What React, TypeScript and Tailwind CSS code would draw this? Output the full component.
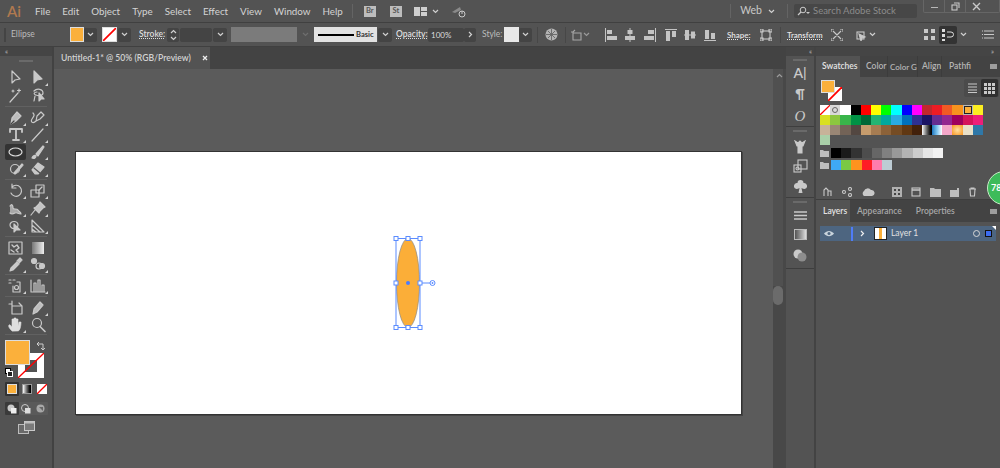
import React from "react";

const GR = "#c9c9c9";

function Tool({ fly, children }: { fly?: boolean; children?: React.ReactNode }) {
  return (
    <svg width="22" height="17.5" viewBox="0 0 22 17.5" className="block">
      <g fill="none" stroke={GR} strokeWidth="1.2" strokeLinejoin="round" strokeLinecap="round">{children}</g>
      {fly && <polygon points="21,14 21,17 18,17" fill="#d0d0d0" />}
    </svg>
  );
}

function Chev({ c = "#d0d0d0", w = 7 }: { c?: string; w?: number }) {
  return (
    <svg width={w} height="5" viewBox="0 0 7 5" className="block">
      <path d="M1 1l2.5 2.5L6 1" fill="none" stroke={c} strokeWidth="1.2" />
    </svg>
  );
}

function Ic({ w = 14, h = 14, children }: { w?: number; h?: number; children?: React.ReactNode }) {
  return (
    <svg width={w} height={h} viewBox={`0 0 ${w} ${h}`} className="block shrink-0">
      <g fill="none" stroke={GR} strokeWidth="1.1">{children}</g>
    </svg>
  );
}

const Sep = () => <div className="h-px bg-[#616161] mx-[5px] my-[1px] w-[42px]" />;

const menus = ["File", "Edit", "Object", "Type", "Select", "Effect", "View", "Window", "Help"];

const row1 = ["none", "reg", "#ffffff", "#000000", "#ff0000", "#ffff00", "#00ff00", "#00ffff", "#0000ff", "#ff00ff", "#c1272d", "#ed1c24", "#f15a24", "#f7931e", "sel", "#fcee21"];
const row2 = ["#d9e021", "#8cc63f", "#39b54a", "#009245", "#006837", "#22b573", "#00a99d", "#29abe2", "#0071bc", "#2e3192", "#1b1464", "#662d91", "#93278f", "#9e005d", "#d4145a", "#ed1e79"];
const row3 = ["#c7b299", "#998675", "#736357", "#534741", "#c69c6d", "#a67c52", "#8c6239", "#754c24", "#603813", "#42210b"];
const grays = ["#000000", "#1a1a1a", "#333333", "#4d4d4d", "#666666", "#808080", "#999999", "#b3b3b3", "#cccccc", "#e6e6e6", "#f2f2f2"];
const cols = ["#3fa9f5", "#7ac943", "#ff931e", "#ff1d25", "#ff7bac", "#bdccd4"];

function NoneSwatch({ cls }: { cls: string }) {
  return (
    <svg viewBox="0 0 10 10" preserveAspectRatio="none" className={cls}>
      <rect width="10" height="10" fill="#fff" />
      <path d="M0 10L10 0" stroke="#f00" strokeWidth="1.3" />
    </svg>
  );
}

function Swatch({ c }: { c: string }) {
  if (c === "none") return <NoneSwatch cls="w-[10.2px] h-[10px] block" />;
  if (c === "reg")
    return (
      <div className="w-[10.2px] h-[10px] bg-[#d8d8d8] flex items-center justify-center">
        <div className="w-[6px] h-[6px] rounded-full border border-[#666]" />
      </div>
    );
  if (c === "sel")
    return (
      <div className="w-[10.2px] h-[10px] bg-[#b8b8b8] p-[1px]">
        <div className="w-full h-full bg-[#fbb03b] border border-[#222]" />
      </div>
    );
  return <div className="w-[10.2px] h-[10px]" style={{ background: c }} />;
}

const Folder = () => (
  <svg width="9" height="8" viewBox="0 0 9 8" className="block mr-[2px]">
    <path d="M0 1h3l1 1h5v6H0z" fill="#bdbdbd" />
  </svg>
);

function Swatches() {
  return (
    <div className="flex flex-col ml-[4px] mt-[2px] w-[164px]">
      <div className="flex">{row1.map((c, i) => <Swatch key={i} c={c} />)}</div>
      <div className="flex">{row2.map((c, i) => <Swatch key={i} c={c} />)}</div>
      <div className="flex">
        {row3.map((c, i) => <Swatch key={i} c={c} />)}
        <div className="w-[10.2px] h-[10px] bg-gradient-to-r from-[#fff] to-[#000]" />
        <div className="w-[10.2px] h-[10px] bg-gradient-to-r from-[#1b75bc] via-[#7cc4ee] to-[#fff]" />
        <div className="w-[10.2px] h-[10px] bg-[#f3a6c8]" />
        <div className="w-[10.2px] h-[10px] bg-[radial-gradient(circle,#ffe0a0,#f7931e)]" />
        <div className="w-[10.2px] h-[10px] bg-[#e8e0c8]" />
        <div className="w-[10.2px] h-[10px] bg-[#2f78a8]" />
      </div>
      <div className="w-[10.2px] h-[10px] bg-[#a9cfa8]" />
      <div className="flex items-center mt-[3px] h-[10px]">
        <Folder />
        {grays.map((c, i) => <Swatch key={i} c={c} />)}
      </div>
      <div className="flex items-center mt-[2px] h-[10px]">
        <Folder />
        {cols.map((c, i) => <Swatch key={i} c={c} />)}
      </div>
    </div>
  );
}

function Dark({ cls, children }: { cls: string; children?: React.ReactNode }) {
  return <div className={`h-[14px] bg-[#444444] rounded-[2px] flex items-center justify-center shrink-0 ${cls}`}>{children}</div>;
}

const Grip = () => <div className="w-[14px] h-[2px] bg-[#6a6a6a] shrink-0" />;

export default function App() {
  return (
    <div
      className="w-[1000px] h-[468px] bg-[#535353] flex flex-col overflow-hidden relative text-[#d4d4d4] text-[9.5px]"
      style={{ fontFamily: 'Lato,"Liberation Sans",sans-serif' }}
    >
      {/* menu bar */}
      <div className="h-[23px] flex items-center shrink-0 border-b border-[#404040] bg-[#535353]">
        <span className="ml-[7px] w-[16px] text-[15px] text-[#b0794f] font-semibold leading-none">Ai</span>
        <div className="flex ml-[12px] gap-[12px] text-[9.8px]">
          {menus.map((m) => <span key={m}>{m}</span>)}
        </div>
        <div className="w-px h-[14px] bg-[#646464] ml-[9px]" />
        <div className="ml-[11px] w-[12px] h-[11px] bg-[#bdbdbd] text-[#555] text-[7.5px] flex items-center justify-center font-bold">Br</div>
        <div className="ml-[14px] w-[12px] h-[11px] bg-[#bdbdbd] text-[#555] text-[7.5px] flex items-center justify-center font-bold">St</div>
        <div className="ml-[12px] w-[13px] h-[9px] flex gap-[1px]">
          <div className="w-[6px] bg-[#cfcfcf]" />
          <div className="flex-1 flex flex-col gap-[1px]"><div className="flex-1 bg-[#cfcfcf]" /><div className="flex-1 bg-[#cfcfcf]" /></div>
        </div>
        <div className="ml-[5px]"><Chev /></div>
        <svg width="16" height="13" viewBox="0 0 16 13" className="ml-[12px]">
          <path d="M1 7l8-5 1 3-6 3z" fill="#8a8a8a" />
          <circle cx="11" cy="9" r="3" fill="none" stroke="#c9c9c9" strokeWidth="1" />
          <path d="M11 6v3" stroke="#c9c9c9" strokeWidth="1" />
        </svg>
        <div className="flex-1" />
        <div className="w-px h-[14px] bg-[#646464] mr-[9px]" />
        <span className="text-[10.5px] text-[#c8c8c8]">Web</span>
        <div className="ml-[6px]"><Chev /></div>
        <div className="w-px h-[14px] bg-[#646464] ml-[12px] mr-[6px]" />
        <div className="w-[123px] h-[14px] bg-[#474747] rounded-[2px] flex items-center pl-[3px] text-[#8b8b8b] text-[9.5px]">
          <svg width="14" height="10" viewBox="0 0 14 10">
            <circle cx="6" cy="4" r="2.8" fill="none" stroke="#c9c9c9" strokeWidth="1" />
            <path d="M4 6L1 9" stroke="#c9c9c9" strokeWidth="1.2" />
            <path d="M9 6h4l-2 2z" fill="#c9c9c9" />
          </svg>
          <span className="ml-[2px]">Search Adobe Stock</span>
        </div>
        <div className="ml-[6px] w-[77px] h-[13px] self-start flex border border-t-0 border-[#666] rounded-b-[2px] items-center text-[#c4c4c4]">
          <div className="w-[20px] flex justify-center"><div className="w-[7px] h-[1.5px] mt-[3px] bg-[#b8b8b8]" /></div>
          <div className="w-[21px] flex justify-center border-l border-[#666] h-full items-center">
            <Ic w={9} h={9}><rect x="1" y="3" width="5" height="5" /><path d="M3 1h5v5" /></Ic>
          </div>
          <div className="flex-1 flex justify-center border-l border-[#666] h-full items-center pr-[12px]">
            <Ic w={9} h={9}><path d="M1 1l7 7M8 1L1 8" strokeWidth="1.4" /></Ic>
          </div>
        </div>
      </div>

      {/* control bar */}
      <div className="h-[24px] flex items-center shrink-0 border-b border-[#404040] text-[8.5px]">
        <div className="ml-[4px] w-[2px] h-[14px] bg-[#444]" />
        <span className="ml-[5px] w-[59px] text-[#bbb]">Ellipse</span>
        <div className="w-[14px] h-[15px] bg-[#fbb03b] border border-[#ddd] shrink-0" />
        <Dark cls="w-[13px] ml-[0px]"><Chev /></Dark>
        <NoneSwatch cls="w-[15px] h-[15px] ml-[5px] border border-[#ddd] block shrink-0" />
        <Dark cls="w-[13px] ml-[1px]"><Chev /></Dark>
        <span className="ml-[8px] w-[24px] underline decoration-dotted text-[#ddd] font-semibold">Stroke:</span>
        <Dark cls="w-[12px] ml-[4px] flex-col gap-[2px]">
          <div className="rotate-180"><Chev /></div>
          <Chev />
        </Dark>
        <Dark cls="w-[32px] ml-[1px] bg-[#3f3f3f]" />
        <Dark cls="w-[14px] ml-[1px]"><Chev /></Dark>
        <div className="w-[66px] h-[15px] ml-[4px] bg-[#7b7b7b] shrink-0" />
        <div className="w-[17px] flex justify-center"><Chev c="#6e6e6e" /></div>
        <div className="w-[63px] h-[15px] bg-[#e2e2e2] flex items-center pl-[4px] shrink-0 text-[#333] text-[7.5px] font-bold">
          <div className="w-[36px] h-[2px] bg-black mr-[2px]" />
          <span>Basic</span>
        </div>
        <Dark cls="w-[14px] ml-[1px]"><Chev /></Dark>
        <span className="ml-[4px] w-[28px] underline decoration-dotted text-[#ddd] font-semibold">Opacity:</span>
        <Dark cls="w-[36px] ml-[4px] justify-start pl-[3px] bg-[#3f3f3f] text-[#ddd] text-[8px]">100%</Dark>
        <Dark cls="w-[12px]"><div className="-rotate-90"><Chev /></div></Dark>
        <span className="ml-[6px] w-[20px] text-[#bbb]">Style:</span>
        <div className="w-[15px] h-[15px] ml-[2px] bg-[#e8e8e8] shrink-0" />
        <Dark cls="w-[13px]"><Chev /></Dark>
        <div className="w-px h-[16px] bg-[#474747] ml-[5px]" />
        <svg width="13" height="13" viewBox="0 0 13 13" className="ml-[7px]">
          <circle cx="6.5" cy="6.5" r="6" fill="#b4b4b4" />
          <path d="M6.5 1v11M1 6.5h11M3 3l7 7M10 3l-7 7" stroke="#666" strokeWidth="0.9" />
        </svg>
        <div className="w-px h-[16px] bg-[#474747] ml-[7px]" />
        <div className="ml-[4px]"><Ic w={12} h={12}><path d="M1 3h2l2-2h0M3 3v8h8V4H3" stroke="#a8a8a8" /></Ic></div>
        <div className="ml-[1px]"><Chev c="#9a9a9a" /></div>
        <svg width="116" height="14" viewBox="0 0 116 14" className="ml-[15px] shrink-0">
          <g fill="#c4c4c4">
            <rect x="0" y="0" width="1" height="14" /><rect x="2" y="2" width="5" height="4" /><rect x="2" y="8" width="10" height="4" />
            <rect x="24.5" y="0" width="1" height="14" /><rect x="22.5" y="2" width="5" height="4" /><rect x="20" y="8" width="10" height="4" />
            <rect x="50" y="0" width="1" height="14" /><rect x="43" y="2" width="6" height="4" /><rect x="39" y="8" width="10" height="4" />
            <rect x="60" y="1" width="12" height="1" /><rect x="61" y="3" width="4" height="10" /><rect x="67" y="3" width="4" height="6" />
            <rect x="79" y="6.5" width="12" height="1" /><rect x="80" y="2" width="4" height="10" /><rect x="86" y="3.5" width="4" height="7" />
            <rect x="99" y="12" width="12" height="1" /><rect x="100" y="2" width="4" height="9" /><rect x="106" y="5" width="4" height="6" />
          </g>
        </svg>
        <span className="ml-[6px] w-[25px] underline decoration-dotted text-[#e4e4e4] font-semibold text-[8px]">Shape:</span>
        <div className="ml-[8px]"><Ic w={12} h={12}><rect x="2" y="2" width="8" height="8" /><path d="M0 0h3v3H0zM9 0h3v3H9zM0 9h3v3H0zM9 9h3v3H9z" /></Ic></div>
        <div className="w-px h-[16px] bg-[#474747] ml-[8px]" />
        <span className="ml-[6px] w-[36px] underline decoration-dotted text-[#e4e4e4] font-semibold text-[8px]">Transform</span>
        <div className="ml-[8px]"><Ic w={12} h={12}><path d="M2 2l8 8M10 2l-8 8M0 0h3M0 0v3M12 0H9M12 0v3M0 12h3M0 12V9M12 12H9M12 12V9" /></Ic></div>
        <div className="ml-[11px]"><Ic w={13} h={12}><rect x="3" y="3" width="7" height="7" /><path d="M5 5l6 3-3 1-1 3z" fill="#c9c9c9" /></Ic></div>
        <div className="ml-[2px]"><Chev /></div>
        <div className="ml-[48px]">
          <svg width="11" height="11" viewBox="0 0 11 11"><path d="M0 0h4v4H0zM7 0h4v4H7zM0 7h4v4H0zM7 7h4v4H7z" fill="#c9c9c9" /></svg>
        </div>
        <div className="ml-[4px] w-[18px] h-[18px] bg-[#333] rounded-[2px] flex items-center justify-center">
          <svg width="12" height="12" viewBox="0 0 12 12"><path d="M0 0h3v3H0zM0 5h3v3H0zM0 10h3v2H0z" fill="#ddd" /><path d="M5 3h4a2 2 0 010 5H5" fill="none" stroke="#ddd" /></svg>
        </div>
        <div className="ml-[3px]"><Chev /></div>
        <div className="ml-[15px]"><Ic w={12} h={9}><path d="M2 1h10M2 4.500h10M2 8h10M0 1h1M0 4.500h1M0 8h1" /></Ic></div>
      </div>

      {/* main */}
      <div className="flex-1 flex min-h-0">
        {/* tools */}
        <div className="w-[54px] shrink-0 flex flex-col border-r-2 border-[#424242]">
          <div className="h-[9px] bg-[#454545] pl-[5px] text-[7px] leading-[9px] text-[#bbb]">«</div>
          <div className="flex-1 flex flex-col">
            <div className="h-[13px] flex justify-center pt-[4px]"><Grip /></div>
            <div className="grid grid-cols-[22px_22px] ml-[5px] auto-rows-[18px] items-center">
              <Tool><path d="M7 2v12l3-3 5-1z" /></Tool>
              <Tool fly><path d="M7 2v12l3-3 5-1z" fill={GR} /></Tool>
              <Tool><path d="M5 15L13 6M14 2v3M12.500 3.500h3M8 3v2M7 4h2" /></Tool>
              <Tool><path d="M7 4c3-3 9-2 9 2 0 3-5 3-7 2-3-1-2-3 1-3M8 9l-1 5" /><path d="M12 6v8l2-2 3 0z" fill={GR} /></Tool>
            </div>
            <Sep />
            <div className="grid grid-cols-[22px_22px] ml-[5px] auto-rows-[17px] mt-[1.5px] items-center">
              <Tool fly><path d="M6 15l1-6 5-6 4 4-5 5z" fill="#bdbdbd" /><path d="M6 15l3-3" stroke="#444" /></Tool>
              <Tool fly><path d="M9 12l1-5 4-4 3 3-4 4zM9 12c-3 3-6 1-4-2s3-4 1-6" /></Tool>
              <Tool fly><path d="M5 3h12v3M5 3v3M11 3v11M8 14h6" strokeWidth="1.8" /></Tool>
              <Tool fly><path d="M5 15L16 3" /></Tool>
              <div className="w-[21px] h-[16px] bg-[#333] rounded-[2px] flex items-center justify-center">
                <svg width="15" height="10" viewBox="0 0 15 10"><ellipse cx="7.500" cy="5" rx="6.500" ry="4" fill="none" stroke="#dedede" strokeWidth="1.200" /></svg>
              </div>
              <Tool fly><path d="M5 15c1-3 3-3 4-2 0 2-2 3-4 2zM9 11l7-8 1 1-6 9z" fill={GR} /></Tool>
              <Tool fly><circle cx="10" cy="9" r="4.500" /><path d="M9 13L17 4l1 1-8 9z" fill={GR} /></Tool>
              <Tool fly><path d="M5 10l6-7 6 4-6 7H8z" fill={GR} /><path d="M7 8l6 5" stroke="#555" /></Tool>
            </div>
            <Sep />
            <div className="grid grid-cols-[22px_22px] ml-[5px] auto-rows-[17.5px] mt-[1.5px] items-center">
              <Tool fly><path d="M7 5a5.500 5.500 0 11-1 6M7 2v4h4" /></Tool>
              <Tool fly><rect x="4" y="8" width="8" height="7" /><rect x="9" y="3" width="8" height="8" /><path d="M12 8l3-3" /></Tool>
              <Tool fly><path d="M5 6c2-3 3 0 3 2s4 0 5 2 3 2 3 4c-3 0-4-2-6-1s-4 1-5 0" fill="#a8a8a8" /></Tool>
              <Tool fly><path d="M13 2l5 5-2 1-3 3-1 2-5-5 2-1 3-3zM8 10l-4 5" fill="#c4c4c4" /></Tool>
              <Tool fly><path d="M5 8a4 3.500 0 018 0 4 3.500 0 01-8 0z" /><path d="M9 7v8l2-2 4 0z" fill={GR} /></Tool>
              <Tool fly><path d="M5 15V3l12 12zM5 8l8 7M5 12l4 3" /></Tool>
            </div>
            <Sep />
            <div className="grid grid-cols-[22px_22px] ml-[5px] auto-rows-[17px] mt-[1.5px] items-center">
              <Tool><rect x="4" y="3" width="13" height="12" /><path d="M7 6l2 2 3-2 2 3-3 2 2 2M6 11l3 2" strokeWidth="1.400" /></Tool>
              <svg width="22" height="17.500" viewBox="0 0 22 17.500"><defs><linearGradient id="gr"><stop offset="0" stopColor="#777" /><stop offset="1" stopColor="#eee" /></linearGradient></defs><rect x="5" y="3" width="12" height="12" fill="url(#gr)" /></svg>
              <Tool fly><path d="M5 15l1-3 6-6 2 2-6 6zM12 5l3-3 2 2-3 3" fill={GR} /></Tool>
              <Tool fly><circle cx="7" cy="5" r="2.500" fill={GR} /><circle cx="12" cy="10" r="3" /><circle cx="15" cy="10" r="2.500" fill={GR} /></Tool>
            </div>
            <Sep />
            <div className="grid grid-cols-[22px_22px] ml-[5px] auto-rows-[17px] mt-[1.5px] items-center">
              <Tool fly><path d="M4 3h2M4 6h2M8 3h2M12 5h3v10H8v-6" /><circle cx="11.500" cy="10.500" r="2" /></Tool>
              <Tool fly><path d="M4 3v12h14M7 14V6h2v8M11 14V3h2v11M15 14V8h2v6" /></Tool>
            </div>
            <Sep />
            <div className="grid grid-cols-[22px_22px] ml-[5px] auto-rows-[17px] mt-[1.5px] items-center">
              <Tool><path d="M4 5h3M7 2v13h10V7H7M14 4l3 3" /></Tool>
              <Tool fly><path d="M6 15l1-5 6-7 3 3-6 7z" fill="#bdbdbd" /></Tool>
              <Tool fly><path d="M7 15c-3-3-4-5-3-6s2 1 3 2V3h2v6V2h2v7V3h2v7l1-4h2c0 4-1 9-3 9z" fill="#dedede" stroke="#dedede" strokeWidth="0.600" /></Tool>
              <Tool><circle cx="10" cy="7" r="4.500" /><path d="M13 10.500L18 15.500" strokeWidth="1.600" /></Tool>
            </div>
            <Sep />
            <div className="relative h-[41px] mt-[4px] shrink-0">
              <div className="absolute left-[18px] top-[13px] w-[26px] h-[25px] bg-white flex items-center justify-center">
                <div className="w-[12px] h-[12px] bg-[#535353]" />
              </div>
              <svg className="absolute left-[18px] top-[13px]" width="26" height="25" viewBox="0 0 26 25"><path d="M0 25L26 0" stroke="#f00" strokeWidth="1.300" /></svg>
              <div className="absolute left-[5px] top-0 w-[25px] h-[25px] bg-[#fbb03b] border border-[#ddd]" />
              <svg className="absolute left-[36px] top-[1px]" width="10" height="10" viewBox="0 0 10 10"><path d="M1 3h6v5M1 3l2-2M1 3l2 2M5 7l2 2 2-2" fill="none" stroke="#ccc" strokeWidth="1" /></svg>
              <div className="absolute left-[5px] top-[28px] w-[8px] h-[9px]">
                <div className="w-[6px] h-[6px] bg-white border border-black" />
                <div className="absolute left-[2px] top-[3px] w-[6px] h-[6px] bg-[#222] border border-white" />
              </div>
            </div>
            <div className="flex ml-[5px] mt-[1px] gap-[1px] items-center">
              <div className="w-[14px] h-[14px] bg-[#333] flex items-center justify-center rounded-[1px]"><div className="w-[10px] h-[10px] bg-[#fbb03b] border border-[#ddd]" /></div>
              <div className="w-[14px] h-[14px] flex items-center justify-center"><div className="w-[10px] h-[10px] bg-gradient-to-r from-white to-black border border-[#999]" /></div>
              <div className="w-[14px] h-[14px] flex items-center justify-center"><NoneSwatch cls="w-[10px] h-[10px] block" /></div>
            </div>
            <div className="flex ml-[5px] mt-[6px] w-[43px] h-[13px] bg-[#5a5a5a] rounded-[1px]">
              <div className="w-[14px] h-[13px] bg-[#3a3a3a] flex items-center justify-center rounded-[1px]">
                <svg width="10" height="10" viewBox="0 0 10 10"><circle cx="4" cy="4" r="3.500" fill="#c9c9c9" /><rect x="4" y="4" width="5.500" height="5.500" fill="#eee" /></svg>
              </div>
              <div className="w-[14px] h-[13px] flex items-center justify-center">
                <svg width="10" height="10" viewBox="0 0 10 10"><circle cx="4" cy="4" r="3.500" fill="none" stroke="#c9c9c9" /><rect x="4" y="4" width="5.500" height="5.500" fill="#ddd" /></svg>
              </div>
              <div className="w-[14px] h-[13px] flex items-center justify-center">
                <svg width="9" height="9" viewBox="0 0 9 9"><circle cx="4.500" cy="4.500" r="4" fill="#a8a8a8" /><path d="M3 3h4v4z" fill="#666" /></svg>
              </div>
            </div>
            <div className="ml-[18px] mt-[6px]">
              <svg width="17" height="13" viewBox="0 0 17 13"><rect x="0.500" y="3.500" width="10" height="9" fill="#6a6a6a" stroke="#bdbdbd" /><rect x="6.500" y="0.500" width="10" height="9" fill="#7a7a7a" stroke="#c9c9c9" /><rect x="6.500" y="0.500" width="10" height="2" fill="#bdbdbd" /></svg>
            </div>
          </div>
        </div>

        {/* document */}
        <div className="flex-1 flex flex-col min-w-0">
          <div className="h-[22px] bg-[#434343] flex shrink-0">
            <div className="w-[156px] bg-[#535353] flex items-center pl-[7px] font-semibold text-[#d2d2d2]">
              <span className="w-[141px] text-[8.6px] whitespace-nowrap">Untitled-1* @ 50% (RGB/Preview)</span>
              <svg width="6" height="6" viewBox="0 0 6 6"><path d="M1 1l4 4M5 1L1 5" stroke="#eee" strokeWidth="1.300" /></svg>
            </div>
          </div>
          <div className="flex-1 flex min-h-0">
            <div className="flex-1 bg-[#5b5b5b] pl-[21px] pt-[82px] min-w-0">
              <div className="w-[667px] h-[264px] bg-white border border-[#333] shadow-[1px_1px_0_#444] flex items-center justify-center">
                <svg width="80" height="100" viewBox="0 0 80 100" className="block mr-[1px]">
                  <ellipse cx="40" cy="50" rx="11.500" ry="44.500" fill="#fbae38" stroke="#8a8a8a" strokeWidth="0.700" />
                  <rect x="28" y="5.500" width="24" height="89" fill="none" stroke="#5b8cff" strokeWidth="1" />
                  <path d="M52 50h13" stroke="#5b8cff" strokeWidth="1" />
                  <circle cx="64.500" cy="50" r="2.500" fill="#fff" stroke="#5b8cff" />
                  <circle cx="64.500" cy="50" r="0.900" fill="#5b8cff" />
                  <circle cx="40" cy="50" r="2" fill="#4a7cff" />
                  <g fill="#fff" stroke="#5b8cff" strokeWidth="1">
                    <rect x="26" y="3.500" width="4" height="4" /><rect x="38" y="3.500" width="4" height="4" /><rect x="50" y="3.500" width="4" height="4" />
                    <rect x="26" y="48" width="4" height="4" /><rect x="50" y="48" width="4" height="4" />
                    <rect x="26" y="92.500" width="4" height="4" /><rect x="38" y="92.500" width="4" height="4" /><rect x="50" y="92.500" width="4" height="4" />
                  </g>
                </svg>
              </div>
            </div>
            <div className="w-[13px] bg-[#484848] shrink-0 flex flex-col items-start">
              <div className="h-[217px] pt-[4px] pl-[2px] bg-[#505050] w-[10px]"><div className="rotate-180"><Chev c="#9a9a9a" /></div></div>
              <div className="w-[10px] h-[19px] rounded-[5px] bg-[#6b6b6b]" />
            </div>
          </div>
        </div>

        {/* dock */}
        <div className="w-[30px] shrink-0 flex flex-col border-r-2 border-[#434343]">
          <div className="h-[9px] bg-[#454545] text-right pr-[2px] text-[7px] leading-[9px] text-[#bbb]">«</div>
          <div className="h-[71px] border-b border-[#3e3e3e] flex flex-col items-center pt-[3px] text-[#c9c9c9]">
            <Grip />
            <span className="mt-[5px] text-[14px] leading-[14px] h-[21px] font-semibold">A|</span>
            <span className="text-[13px] leading-[14px] h-[21px] font-bold">¶</span>
            <span className="text-[15px] leading-[16px] italic" style={{ fontFamily: '"Liberation Serif",serif' }}>O</span>
          </div>
          <div className="h-[71px] border-b border-[#3e3e3e] flex flex-col items-center pt-[3px]">
            <Grip />
            <div className="mt-[8px]"><Ic w={12} h={14}><path d="M1 1l3 2 2-2 2 2 3-2-2 5H8v7H4V6H3z" fill={GR} /></Ic></div>
            <div className="mt-[5px]"><Ic w={15} h={15}><rect x="5" y="1" width="9" height="9" /><rect x="1" y="6" width="7" height="7" /><circle cx="4.500" cy="9.500" r="1.500" /></Ic></div>
            <svg width="13" height="13" viewBox="0 0 13 13" className="mt-[6px]"><path d="M6.500 0a3 3 0 013 3 3 3 0 011 6c-1 0-2-.3-3-1l1 5h-4l1-5c-1 .7-2 1-3 1a3 3 0 011-6 3 3 0 013-3z" fill={GR} /></svg>
          </div>
          <div className="h-[71px] border-b border-[#3e3e3e] flex flex-col items-center pt-[3px]">
            <Grip />
            <div className="mt-[8px]"><Ic w={13} h={9}><path d="M0 1h13M0 4.500h13M0 8h13" strokeWidth="1.300" /></Ic></div>
            <div className="mt-[9px] w-[13px] h-[11px] bg-gradient-to-r from-[#555] to-[#ddd] border border-[#bbb]" />
            <svg width="14" height="13" viewBox="0 0 14 13" className="mt-[9px]"><circle cx="5" cy="5" r="4.500" fill="#c9c9c9" /><circle cx="9" cy="8" r="4.500" fill="#8d8d8d" /></svg>
          </div>
        </div>

        {/* panels */}
        <div className="w-[184px] shrink-0 flex flex-col">
          <div className="h-[9px] bg-[#454545] text-right pr-[6px] text-[7px] leading-[9px] text-[#bbb]">»</div>
          <div className="h-[143px] flex flex-col relative">
            <div className="h-[21px] bg-[#434343] flex items-center text-[8.500px] shrink-0 text-[#b5b5b5] font-semibold">
              <div className="w-[44px] h-full bg-[#535353] flex items-center pl-[6px] text-[#e4e4e4]">Swatches</div>
              <div className="w-[28px] h-full flex items-center pl-[6px] border-r border-[#3c3c3c] whitespace-nowrap">Color</div>
              <div className="w-[30px] h-full flex items-center pl-[2px] border-r border-[#3c3c3c] whitespace-nowrap text-[8px]">Color G</div>
              <div className="w-[24px] h-full flex items-center pl-[4px] border-r border-[#3c3c3c] whitespace-nowrap">Align</div>
              <div className="w-[30px] h-full flex items-center pl-[7px] whitespace-nowrap">Pathfi</div>
              <div className="ml-auto mr-[3px] w-[7px] h-[5px] bg-[#9e9e9e]" />
            </div>
            <div className="flex mt-[1px] h-[25px] relative shrink-0">
              <div className="relative ml-[5px] mt-[2px] w-[22px] h-[22px]">
                <NoneSwatch cls="absolute left-[7px] top-[7px] w-[14px] h-[14px] block" />
                <div className="absolute left-0 top-0 w-[14px] h-[13px] bg-[#fbb03b] border border-[#ddd]" />
              </div>
              <div className="ml-auto mt-[1px] mr-[1px] w-[35px] h-[18px] flex rounded-[2px] bg-[#4b4b4b]">
                <div className="w-[17px] flex items-center justify-center"><Ic w={11} h={10}><path d="M1 1h9M1 4h9M1 7h9M1 9.500h9" strokeWidth="1.100" /></Ic></div>
                <div className="w-[17px] bg-[#303030] flex items-center justify-center rounded-[2px]">
                  <svg width="11" height="11" viewBox="0 0 11 11"><path d="M0 0h3v3H0zM4 0h3v3H4zM8 0h3v3H8zM0 4h3v3H0zM4 4h3v3H4zM8 4h3v3H8zM0 8h3v3H0zM4 8h3v3H4zM8 8h3v3H8z" fill="#c9c9c9" /></svg>
                </div>
              </div>
            </div>
            <Swatches />
            <div className="mt-auto h-[14px] flex items-center pl-[7px] gap-[9px]">
              <Ic w={10} h={10}><path d="M1 9V3l2-2 2 2v6M5 9V4h3v5" /></Ic>
              <Ic w={10} h={10}><circle cx="2" cy="5" r="1.500" /><circle cx="8" cy="2" r="1.500" /><circle cx="8" cy="8" r="1.500" /></Ic>
              <svg width="14" height="9" viewBox="0 0 14 9"><path d="M3 8a3 3 0 010-5 4 4 0 017-1 3 3 0 011 6z" fill="#c9c9c9" /></svg>
              <svg width="10" height="10" viewBox="0 0 10 10" className="ml-[8px]"><path d="M0 0h10v10H0z" fill="#b0b0b0" /><path d="M2 2h2v2H2zM6 2h2v2H6zM2 6h2v2H2zM6 6h2v2H6z" fill="#444" /></svg>
              <Ic w={10} h={10}><rect x="1" y="1" width="8" height="8" /><path d="M1 3h8" strokeWidth="1.500" /></Ic>
              <svg width="11" height="9" viewBox="0 0 11 9"><path d="M0 0h4l1 1h6v8H0z" fill="#bdbdbd" /></svg>
              <svg width="9" height="9" viewBox="0 0 9 9"><path d="M0 2h7V0h2v9H2v0H0z" fill="#bdbdbd" /></svg>
              <Ic w={9} h={10}><path d="M1 2h7M2 2l.500 7h4L7 2M3 2V1h3v1" /></Ic>
            </div>
          </div>
          <div className="h-px bg-[#3e3e3e]" />
          <div className="h-[22px] bg-[#434343] flex items-center text-[8.500px] shrink-0 text-[#a8a8a8] font-semibold">
            <div className="w-[34px] h-full bg-[#535353] flex items-center pl-[7px] text-[#e4e4e4]">Layers</div>
            <span className="ml-[7px]">Appearance</span>
            <span className="ml-[14px]">Properties</span>
            <div className="ml-auto mr-[3px] w-[7px] h-[5px] bg-[#9e9e9e]" />
          </div>
          <div className="mt-[4px] ml-[4px] w-[176px] h-[15px] bg-[#4d6580] flex items-center relative shrink-0">
            <svg width="10" height="7" viewBox="0 0 10 7" className="ml-[4px]"><path d="M0 3.500C3 0 7 0 10 3.500 7 7 3 7 0 3.500z" fill="#c9d4dd" /><circle cx="5" cy="3.500" r="1.500" fill="#4d6580" /></svg>
            <div className="ml-[17px] w-[2px] h-[14px] bg-[#4f7cf7]" />
            <svg width="5" height="7" viewBox="0 0 5 7" className="ml-[7px]"><path d="M1 1l2.500 2.500L1 6" fill="none" stroke="#eee" strokeWidth="1.200" /></svg>
            <div className="ml-[9px] w-[13px] h-[13px] bg-white border border-[#222] flex justify-center">
              <div className="w-[3px] h-full bg-[#fbb03b]" />
            </div>
            <span className="ml-[4px] text-[#e0e0e0] text-[8.500px]">Layer 1</span>
            <div className="ml-auto w-[7px] h-[7px] rounded-full border border-[#d8d8d8]" />
            <div className="ml-[5px] mr-[4px] w-[7px] h-[7px] bg-[#3b6cf0] border border-[#111]" />
            <div className="absolute right-0 top-0 w-0 h-0 border-t-[4px] border-l-[4px] border-t-white border-l-transparent" />
          </div>
        </div>
      </div>

      {/* floating green badge */}
      <div className="absolute left-[987px] top-[171px] w-[34px] h-[34px] rounded-full bg-[#3dbb5a] border border-[#c8e8c8] flex items-center pl-[3px] text-white text-[9px] font-bold">78</div>
    </div>
  );
}
